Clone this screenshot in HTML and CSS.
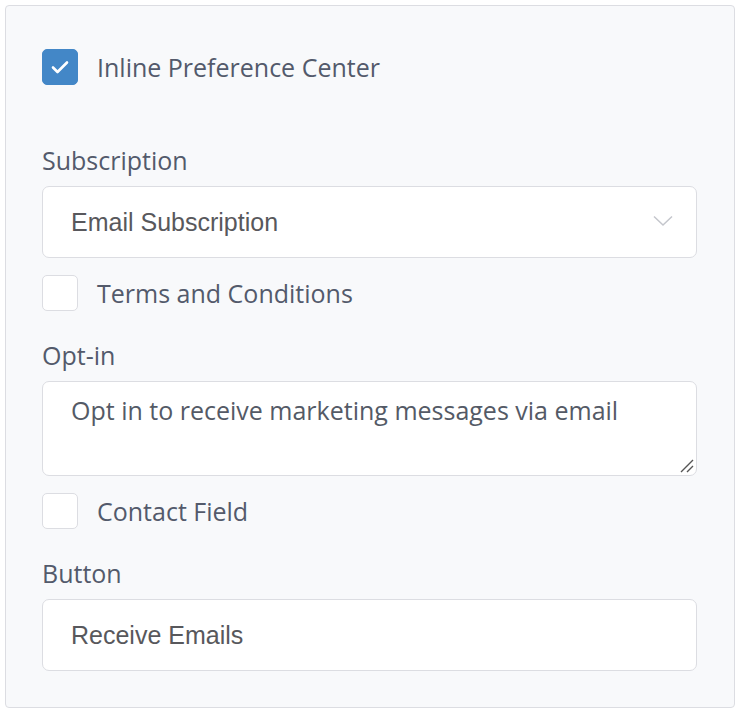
FILE: index.html
```html
<!DOCTYPE html>
<html>
<head>
<meta charset="utf-8">
<link rel="stylesheet" href="styles.css">
</head>
<body>
<div class="card">
  <label class="check-row top">
    <span class="box checked">
      <svg width="20" height="16" viewBox="0 0 20 16"><path d="M3 8.5l4.5 4.5L17 3.5" fill="none" stroke="#fff" stroke-width="2.6" stroke-linecap="round" stroke-linejoin="round"/></svg>
    </span>
    <span class="check-label">Inline Preference Center</span>
  </label>

  <div class="field-label first">Subscription</div>
  <div class="select">
    <span>Email Subscription</span>
    <svg class="chev" width="20" height="12" viewBox="0 0 20 12"><path d="M1 1.5l9 8.5 9-8.5" fill="none" stroke="#c4c6cc" stroke-width="1.5"/></svg>
  </div>

  <label class="check-row">
    <span class="box"></span>
    <span class="check-label">Terms and Conditions</span>
  </label>

  <div class="field-label">Opt-in</div>
  <div class="textarea">
    <span>Opt in to receive marketing messages via email</span>
    <svg class="grip" width="14" height="14" viewBox="0 0 14 14"><path d="M1 13L13 1M7 13L13 7" stroke="#555" stroke-width="1.4"/></svg>
  </div>

  <label class="check-row">
    <span class="box"></span>
    <span class="check-label">Contact Field</span>
  </label>

  <div class="field-label">Button</div>
  <div class="input"><span>Receive Emails</span></div>
</div>
</body>
</html>
```
FILE: styles.css
```css
html, body {
  margin: 0;
  padding: 0;
  background: #ffffff;
}
body {
  padding: 5px 7px 7px 5px;
  font-family: "Open Sans", "Noto Sans", sans-serif;
}
.card {
  box-sizing: border-box;
  width: 730px;
  height: 703px;
  background: #f8f9fb;
  border: 1px solid #dcdde2;
  border-radius: 4px;
  padding: 43px 37px 0 36px;
  display: flex;
  flex-direction: column;
}
.check-row {
  display: flex;
  align-items: center;
  height: 36px;
  gap: 19px;
  margin-top: 17px;
}
.check-row.top {
  margin-top: 0;
}
.box {
  box-sizing: border-box;
  width: 36px;
  height: 36px;
  border-radius: 5px;
  background: #ffffff;
  border: 1px solid #dcdde2;
  display: flex;
  align-items: center;
  justify-content: center;
  flex: none;
}
.box.checked {
  background: #4387c7;
  border-color: #4387c7;
}
.check-label {
  font-size: 25px;
  color: #535a6b;
  line-height: 32px;
}
.field-label {
  font-size: 25px;
  color: #535a6b;
  line-height: 32px;
  margin-top: 28px;
  margin-bottom: 10px;
}
.field-label.first {
  margin-top: 59px;
}
.select, .input, .textarea {
  box-sizing: border-box;
  width: 655px;
  background: #ffffff;
  border: 1px solid #dcdde2;
  border-radius: 7px;
  padding-left: 28px;
  color: #58585c;
  font-size: 25px;
}
.select, .input {
  height: 72px;
  display: flex;
  align-items: center;
  font-family: "Liberation Sans", Arial, sans-serif;
}
.select span, .input span {
  flex: 1;
}
.chev {
  margin-right: 23px;
  margin-top: -2px;
}
.textarea {
  position: relative;
  height: 95px;
  padding-top: 12px;
  font-family: "Open Sans", "Noto Sans", sans-serif;
  font-size: 25px;
  line-height: 32px;
  color: #545a66;
}
.grip {
  position: absolute;
  right: 2px;
  bottom: 2px;
}
.input {
  height: 72px;
}
```
